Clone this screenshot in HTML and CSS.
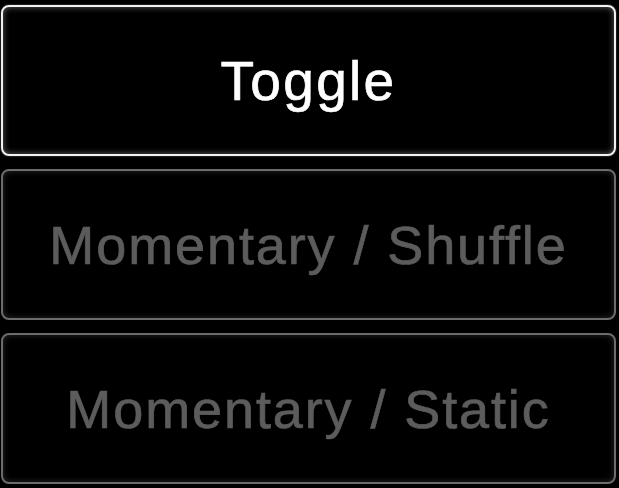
FILE: index.html
```html
<!DOCTYPE html>
<html>
<head>
<meta charset="utf-8">
<link rel="stylesheet" href="styles.css">
</head>
<body>
<div class="stack">
  <div class="btn active">Toggle</div>
  <div class="btn">Momentary / Shuffle</div>
  <div class="btn">Momentary / Static</div>
</div>
</body>
</html>
```
FILE: styles.css
```css
html, body {
  margin: 0;
  padding: 0;
  background: #000;
}
.stack {
  display: flex;
  flex-direction: column;
  gap: 13px;
  padding: 5px 3px 0 1px;
}
.btn {
  height: 151px;
  box-sizing: border-box;
  border: 2px solid #6c6c6c;
  border-radius: 8px;
  box-shadow: inset 0 0 6px rgba(120,120,120,0.35);
  display: flex;
  align-items: center;
  justify-content: center;
  font-family: "Liberation Sans", Arial, sans-serif;
  font-size: 54px;
  letter-spacing: 1.9px;
  -webkit-text-stroke: 0.7px currentColor;
  color: #5c5c5c;
}
.btn.active {
  border-color: #f2f2f2;
  box-shadow: inset 0 0 6px rgba(200,200,200,0.5), 0 0 2px rgba(255,255,255,0.4);
  color: #fff;
  font-size: 55px;
  letter-spacing: 2.3px;
}
```
